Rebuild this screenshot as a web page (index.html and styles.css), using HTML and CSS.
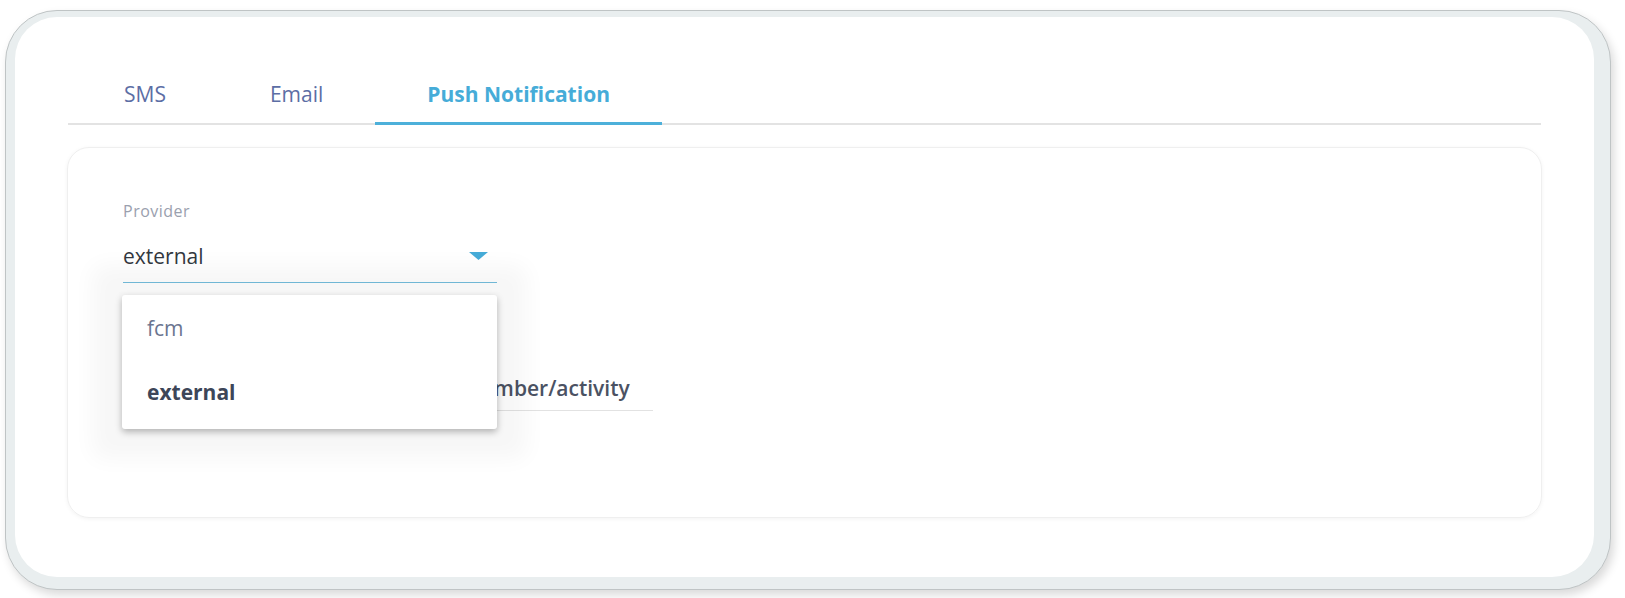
FILE: index.html
```html
<!DOCTYPE html>
<html lang="en">
<head>
<meta charset="UTF-8">
<meta name="viewport" content="width=device-width, initial-scale=1.0">
<title>Notification Settings</title>
<!-- Styles -->
<link rel="stylesheet" href="styles.css">
</head>
<body>

<div class="frame">
  <div class="window">

    <nav class="tabs">
      <a class="tab">SMS</a>
      <a class="tab">Email</a>
      <a class="tab active">Push Notification</a>
    </nav>

    <section class="panel">
      <div class="field provider-field">
        <label class="field-label">Provider</label>
        <div class="select">
          <span class="select-value">external</span>
          <svg class="select-arrow" width="19" height="8" viewBox="0 0 19 8"><path d="M0 0h19l-9.5 8z" fill="#46acd8"/></svg>
        </div>
        <!-- open dropdown -->
        <ul class="menu">
          <li class="menu-item">fcm</li>
          <li class="menu-item selected">external</li>
        </ul>
      </div>

      <div class="field action-field">
        <label class="field-label">Click action</label>
        <div class="input">https://notify.apps.example.com/member/activity</div>
      </div>
    </section>

  </div>
</div>

</body>
</html>
```

FILE: styles.css
```css
body {
  margin: 0;
  font-family: "Open Sans", "DejaVu Sans", sans-serif;
  background-color: #fff;
}

/* screenshot-like window frame */
.frame {
  margin: 10px 14px 8px 5px;
  height: 580px;
  box-sizing: border-box;
  padding: 6px 16px 12px 9px;
  border: 1px solid #bfc4c5;
  border-radius: 52px;
  background-color: #e9eeef;
  box-shadow: 3px 5px 10px rgba(0, 0, 0, 0.15);
}

.window {
  height: 100%;
  box-sizing: border-box;
  padding: 0 53px;
  border-radius: 42px;
  background-color: #fff;
}

/* tabs */
.tabs {
  display: flex;
  padding-left: 4px;
  border-bottom: 2px solid #e3e3e3;
}

.tab {
  padding: 60px 52px 11px;
  margin-bottom: -2px;
  font-size: 21px;
  line-height: 34px;
  color: #5c6ea5;
  border-bottom: 3px solid transparent;
  cursor: pointer;
}

.tab.active {
  font-weight: 700;
  color: #46acd8;
  border-bottom-color: #4db0da;
}

/* card */
.panel {
  height: 371px;
  box-sizing: border-box;
  margin: 22px -1px 0;
  padding: 54px 55px 0;
  border: 1px solid #efefef;
  border-radius: 22px;
  box-shadow: 0 1px 4px rgba(0, 0, 0, 0.05);
}

.field {
  position: relative;
  width: 374px;
}

.field-label {
  display: block;
  font-size: 16px;
  letter-spacing: 0.5px;
  line-height: 18px;
  color: #9aa0ae;
}

.select {
  display: flex;
  align-items: center;
  justify-content: space-between;
  margin-top: 22px;
  padding-bottom: 12px;
  border-bottom: 1px solid #74bddc;
}

.select-value {
  font-size: 21px;
  line-height: 28px;
  color: #333840;
}

.select-arrow {
  margin-right: 9px;
}

.menu {
  position: absolute;
  top: calc(100% + 12px);
  left: -1px;
  width: 375px;
  margin: 0;
  padding: 1px 0 5px;
  list-style: none;
  background-color: #fff;
  border-radius: 3px;
  box-shadow: 0 3px 7px rgba(0, 0, 0, 0.28), 0 0 22px 30px rgba(0, 0, 0, 0.035);
  z-index: 2;
}

.menu-item {
  padding-left: 25px;
  font-size: 21px;
  line-height: 64px;
  color: #6b7590;
}

.menu-item.selected {
  font-weight: 700;
  color: #3d4658;
}

.action-field {
  width: 530px;
  margin-top: 51px;
}

.input {
  margin-top: 22px;
  padding-bottom: 8px;
  font-size: 21px;
  font-weight: 600;
  line-height: 28px;
  color: #4b5263;
  border-bottom: 1px solid #e2e2e2;
  white-space: nowrap;
  overflow: hidden;
}
```
